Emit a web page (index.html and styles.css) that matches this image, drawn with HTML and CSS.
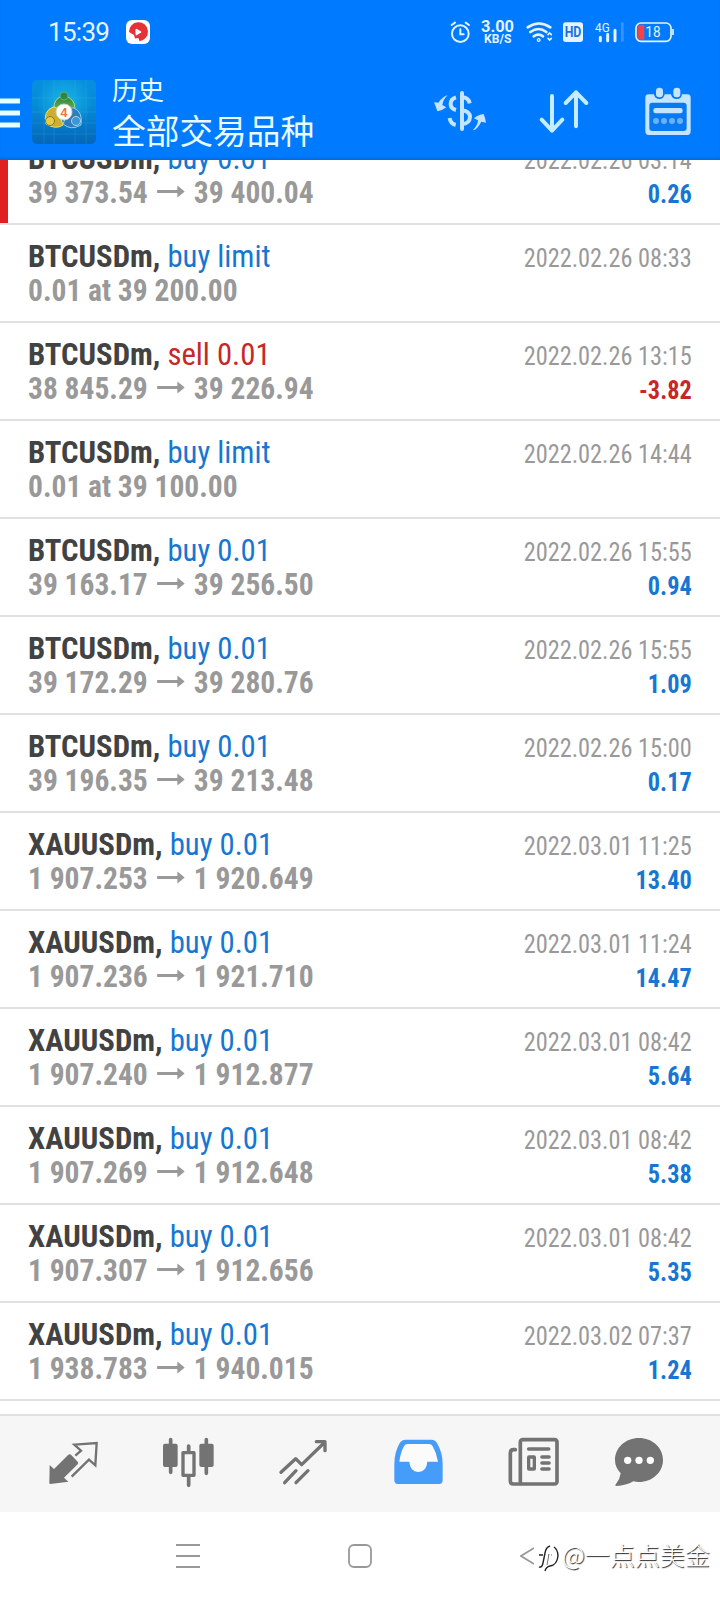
FILE: index.html
```
<!DOCTYPE html>
<html lang="zh-CN">
<head>
<meta charset="utf-8">
<title>历史</title>
<link rel="stylesheet" href="styles.css">
</head>
<body>
<div class="screen">
  <header class="header">
    <div class="status">
      <span class="clock">15:39</span>
      <svg class="rec" width="24" height="24" viewBox="0 0 24 24"><rect width="24" height="24" rx="6" fill="#fff"/><path d="M3 12a9.500 9.500 0 1 1 10.500 9.200L12.500 18 9 18.500 8 15z" fill="#e53238"/><path d="M10.500 9.800l3.800 2.200-3.800 2.200z" fill="#fff" stroke="#fff" stroke-width="2" stroke-linejoin="round"/></svg>
      <div class="status-icons">
        <svg width="24" height="28" viewBox="264 54 72 84" fill="none" stroke="#e4f3ff" stroke-width="6" stroke-linecap="round"><circle cx="301" cy="101" r="25"/><path d="M301 88v15h10M275 75l10-7M327 75l-10-7"/></svg>
        <svg class="gap8 speed" width="36" height="28" viewBox="360 54 108 84"><text x="363" y="95" font-size="48" textLength="99" lengthAdjust="spacingAndGlyphs">3.00</text><text x="372" y="130" font-size="37" textLength="82" lengthAdjust="spacingAndGlyphs">KB/S</text></svg>
        <svg class="gap8" width="30" height="28" viewBox="492 54 90 84" fill="none" stroke="#e4f3ff" stroke-width="8" stroke-linecap="round"><path d="M503 82q34-23 68 0M511 96q25-18 48 0M521 109q14-10 28 0"/><circle cx="536" cy="120" r="2"/><path d="M564 104l5-5 5 5M564 115l5 5 5-5" stroke-width="5"/></svg>
        <svg class="gap8" width="22" height="28" viewBox="606 54 66 84"><rect x="609" y="67" width="60" height="59" rx="8" fill="#e4f3ff"/><text class="hd" x="614" y="112" font-size="44" textLength="50" lengthAdjust="spacingAndGlyphs">HD</text></svg>
        <svg class="gap10" width="32" height="28" viewBox="702 54 96 84"><text class="net" x="705" y="96" font-size="40" textLength="44" lengthAdjust="spacingAndGlyphs">4G</text><path d="M721 112v10M743 103v19M765 91v31" stroke="#e4f3ff" stroke-width="9" stroke-linecap="round"/><path d="M787 67v58" stroke="#3c93ff" stroke-width="8"/></svg>
        <svg class="gap8" width="42" height="28" viewBox="822 54 126 84"><rect x="828" y="69" width="105" height="55" rx="15" fill="none" stroke="#e4f3ff" stroke-width="5"/><path d="M853 74h-10q-10 0-10 10v25q0 10 10 10h10z" fill="#f0434e"/><path d="M939 87v18" stroke="#e4f3ff" stroke-width="5"/><text class="net" x="856" y="112" font-size="44" textLength="46" lengthAdjust="spacingAndGlyphs">18</text></svg>
      </div>
    </div>
    <div class="appbar">
      <svg class="burger" width="20" height="30" viewBox="0 0 20 30"><path d="M0 3h20M0 15h20M0 27h20" stroke="#e6ffff" stroke-width="5"/></svg>
      <svg class="logo" width="64" height="64" viewBox="0 0 64 64">
        <defs>
          <linearGradient id="bg" x1="0" y1="0" x2="0" y2="1"><stop offset="0" stop-color="#078fdf"/><stop offset=".4" stop-color="#068bd6"/><stop offset="1" stop-color="#0566b8"/></linearGradient>
          <radialGradient id="glow"><stop offset="0" stop-color="#20c0e8"/><stop offset="1" stop-color="#20c0e8" stop-opacity="0"/></radialGradient>
          <linearGradient id="gr" x1="0" y1="0" x2="0" y2="1"><stop offset="0" stop-color="#267f3c"/><stop offset="1" stop-color="#83c653"/></linearGradient>
        </defs>
        <rect width="64" height="64" rx="5" fill="url(#bg)"/>
        <circle cx="32" cy="22" r="28" fill="url(#glow)" opacity=".8"/>
        <path d="M12 0v64M22 0v64M43 0v64M54 0v64M0 18h64M0 32h64M0 43h64M0 54h64" stroke="#42bce9" stroke-width=".7" opacity=".3"/>
        <path d="M22 29q-1-11 10-13 11 2 11 13l-3 6H24z" fill="url(#gr)" stroke="#a9d98c" stroke-width="1"/>
        <circle cx="32" cy="16" r="4" fill="#2c8646" stroke="#5fb070"/>
        <path d="M14 44q-3-13 7-17 5 0 5 4l5 14q-7 5-17-1z" fill="#cfae2b" stroke="#efe07c" stroke-width="1"/>
        <circle cx="18" cy="41" r="4.500" fill="#e4cd48" stroke="#8d7716"/>
        <path d="M49 45q2-13-7-17-5-1-6 4l-5 12q8 7 18 1z" fill="#2f7cc0" stroke="#8fcaf0" stroke-width="1"/>
        <circle cx="44" cy="41" r="4.500" fill="#3d96d7" stroke="#a5d6f3"/>
        <circle cx="32" cy="32" r="8" fill="#fff" stroke="#c9d3c1"/>
        <text class="four" x="28.500" y="36.500" font-size="12.500">4</text>
      </svg>
      <div class="titles">
        <div class="title">历史</div>
        <div class="subtitle">全部交易品种</div>
      </div>
      <div class="actions">
        <svg width="56" height="50" viewBox="216 261 168 150" fill="none" stroke="#c5e4ff" stroke-width="12" stroke-linecap="round"><path d="M306 279v108" stroke-width="12"/><path d="M329 310q-4-18-23-18M288 292q-16 4-16 20 0 14 16 18M306 331q23 3 24 20-1 20-24 21M269 354q2 17 18 21" stroke-linecap="butt"/><path d="M263 286q-13 2-28 22l-13-1q6 14 10 27 15-2 27-12l-12-7q3-18 16-29zM338 391q14-2 26-26l14 3q-2-14-7-26-15 1-29 13l12 6q-1 16-16 30z" fill="#c5e4ff" stroke="none"/></svg>
        <svg class="sort" width="52" height="50" viewBox="534 261 156 150" fill="none" stroke="#c5ecff" stroke-width="12" stroke-linecap="round" stroke-linejoin="round"><path d="M576 288v104M545 359l31 33 31-33M648 379V277M617 309l31-32 31 32"/></svg>
        <svg class="cal" width="48" height="50" viewBox="852 261 144 150"><path d="M866 283h16q2 14 16 14t16-14h19q2 14 17 14t16-14h16q10 0 10 10v101q0 11-10 11H866q-10 0-10-11V293q0-10 10-10z" fill="#c5e4ff"/><rect x="868" y="308" width="112" height="85" rx="9" fill="#0879f0"/><rect x="888" y="263" width="21" height="29" rx="10" fill="#c5e4ff"/><rect x="940" y="263" width="21" height="29" rx="10" fill="#c5e4ff"/><rect x="880" y="324" width="88" height="16" rx="7" fill="#c5e4ff"/><g fill="#69b2fb"><circle cx="888" cy="363" r="9"/><circle cx="912" cy="363" r="9"/><circle cx="936" cy="363" r="9"/><circle cx="960" cy="363" r="9"/></g></svg>
      </div>
    </div>
  </header>

  <main class="list" id="list"></main>

  <nav class="tabs">
    <svg width="56" height="60" viewBox="135 96 168 180"><path d="M149 195l13 12 43-43q4-3 8 0l20 21q3 4 0 8l-41 40 13 12-54 7q-3 0-3-3z" fill="#737373"/><path d="M226 167l17-15-20-18 67-5-4 67-19-17-52 51" fill="none" stroke="#737373" stroke-width="7"/></svg>
    <svg width="56" height="60" viewBox="480 96 168 180" fill="none" stroke="#737373"><path d="M512 119v98M566 138v118M619 119v101" stroke-width="11" stroke-linecap="round"/><rect x="489" y="131" width="44" height="70" rx="6" fill="#737373" stroke="none"/><rect x="598" y="131" width="43" height="70" rx="6" fill="#737373" stroke="none"/><rect x="549" y="158" width="33" height="68" fill="#f6f6f6" stroke-width="10" stroke-linejoin="round"/></svg>
    <svg width="56" height="60" viewBox="825 96 168 180" fill="none" stroke="#737373" stroke-width="10" stroke-linecap="round" stroke-linejoin="round"><path d="M843 217l44-41 18 18 70-68M949 125h26v27M854 248l34-36M888 248l36-36"/></svg>
    <svg width="56" height="60" viewBox="90 96 168 180"><path d="M137 119h76q14 0 19 12 16 27 16 60v50q0 11-11 11H114q-11 0-11-11v-50q0-33 15-60 6-12 19-12z" fill="#459df9"/><path d="M143 132h63q9 0 12 7 12 20 16 46h-32q-2 30-27 31-25-1-27-31h-30q4-29 14-46 3-7 11-7z" fill="#fbfbfb"/></svg>
    <svg width="56" height="60" viewBox="435 96 168 180" fill="none" stroke="#737373" stroke-width="11"><rect x="481" y="119" width="110" height="133" rx="7"/><path d="M466 149h-5q-10 0-10 10v83q0 10 10 10h22" stroke-linecap="round"/><path d="M506 147h60M546 171h21M546 189h21M546 207h21" stroke-linecap="round"/><rect x="506" y="171" width="17" height="36" rx="1" stroke-width="10"/></svg>
    <svg class="last" width="56" height="60" viewBox="753 96 168 180"><path d="M837 114c40 0 72 29 72 66s-32 66-72 66q-9 0-17-2-22 13-51 14-6-1-1-6 12-15 14-32-17-18-17-40c0-37 32-66 72-66z" fill="#737373"/><g fill="#fff"><circle cx="803" cy="181" r="11"/><circle cx="837" cy="181" r="11"/><circle cx="871" cy="181" r="11"/></g></svg>
  </nav>

  <footer class="sysnav">
    <svg class="recent" width="24" height="24" viewBox="0 0 24 24"><path d="M0 1h24M0 12h24M0 23h24" stroke="#999" stroke-width="2"/></svg>
    <svg class="home" width="24" height="24" viewBox="0 0 24 24"><rect x="1" y="1" width="22" height="22" rx="5" fill="none" stroke="#999" stroke-width="1.800"/></svg>
    <svg class="back" width="14" height="18" viewBox="0 0 14 18"><path d="M14 1L1 9l13 8" fill="none" stroke="#999" stroke-width="1.800"/></svg>
    <svg class="mark" width="23" height="30" viewBox="0 0 23 30" fill="none" stroke="#222"><path d="M2 24q3 1 4-4l2-10q1-6 5-7M2 12h4M17 4q4 3 4 9-1 9-8 10-4 1-5 5" stroke-width="1.400"/><path d="M10 22l2-11M11 12h1M14 12h1" stroke-width="1" stroke="#777"/></svg>
    <span class="watermark">@一点点美金</span>
  </footer>
</div>
<script src="rows.js"></script>
</body>
</html>
```

FILE: styles.css
```
* { box-sizing: border-box; }
body { margin: 0; background: #fff; }
svg { display: block; flex: none; }
.screen {
  width: 720px;
  height: 1600px;
  display: flex;
  flex-direction: column;
  overflow: hidden;
  background: #fff;
  font-family: "Roboto Condensed", Roboto, "Noto Sans CJK SC", sans-serif;
}
.header { flex: none; height: 160px; background: #007aff; box-shadow: inset 0 -3px 2px -1px #086bda; }
.status { height: 64px; display: flex; align-items: center; padding-left: 48px; }
.clock { width: 78px; font: 400 26px/30px Roboto, sans-serif; letter-spacing: -0.7px; color: #e4f3ff; }
.status-icons { display: flex; margin-left: 298px; }
.gap8 { margin-left: 8px; }
.gap10 { margin-left: 10px; }
.speed text { font-family: Roboto, sans-serif; font-weight: 700; fill: #e4f3ff; }
.hd { font-family: Roboto, sans-serif; font-weight: 700; fill: #1474e0; }
.net { font-family: Roboto, sans-serif; fill: #e4f3ff; }
.four { font-family: "Liberation Sans", sans-serif; font-weight: 700; fill: #e8743c; }

.appbar { height: 96px; display: flex; align-items: flex-start; }
.burger { margin-top: 34px; }
.logo { margin: 16px 0 0 12px; }
.titles { width: 216px; margin: 8px 0 0 16px; color: #e8fbff; font-family: "Noto Sans CJK SC", sans-serif; white-space: nowrap; font-weight: 400; }
.title { font-size: 26px; line-height: 34px; }
.subtitle { font-size: 33.7px; line-height: 48px; }
.actions { display: flex; margin: 23px 0 0 104px; }
.sort { margin-left: 50px; }
.cal { margin-left: 54px; }

.list { flex: none; height: 1254px; overflow: hidden; display: flex; flex-direction: column; justify-content: flex-start; }
.row {
  flex: none;
  height: 98px;
  padding: 14px 28px 0;
  display: flex;
  justify-content: space-between;
  border-bottom: 2px solid #e1e1e1;
  font-stretch: 75%;
  font-size: 32px;
  line-height: 34px;
  white-space: nowrap;
}
.row.cut { margin-top: -33px; box-shadow: inset 8px 0 #de2020; }
.head { transform: scaleX(.96); transform-origin: left; }
.symbol { font-weight: 700; color: #424242; }
.buy { color: #1676d2; }
.sell { color: #c62828; }
.prices { display: flex; align-items: center; font-weight: 700; color: #999; transform: scaleX(.922); transform-origin: left; }
.arrow { margin: 0 10px; }
.meta { padding-top: 2px; text-align: right; font-size: 26px; color: #999; transform: scaleX(.935); transform-origin: right; }
.profit { font-weight: 700; }

.tabs { flex: none; height: 98px; display: flex; gap: 59px; padding: 16px 0 0 45px; background: #f6f6f6; border-top: 2px solid #e1e1e1; }
.last { margin-left: -9px; }

.sysnav { height: 88px; display: flex; align-items: flex-start; padding: 32px 0 0 176px; }
.home { margin-left: 148px; }
.back { margin: 3px 0 0 148px; }
.mark { margin: -1px 0 0 3px; }
.watermark { margin: -8px 0 0 2px; font: 300 25px/36px "Noto Sans CJK SC", sans-serif; color: #fff; text-shadow: 1px 1px 1px #222; white-space: nowrap; }
```

FILE: rows.js
```
const deals = [
  ['BTCUSDm', 'buy 0.01', '39 373.54', '39 400.04', '2022.02.26 03:14', '0.26'],
  ['BTCUSDm', 'buy limit', '0.01 at 39 200.00', '', '2022.02.26 08:33', ''],
  ['BTCUSDm', 'sell 0.01', '38 845.29', '39 226.94', '2022.02.26 13:15', '-3.82'],
  ['BTCUSDm', 'buy limit', '0.01 at 39 100.00', '', '2022.02.26 14:44', ''],
  ['BTCUSDm', 'buy 0.01', '39 163.17', '39 256.50', '2022.02.26 15:55', '0.94'],
  ['BTCUSDm', 'buy 0.01', '39 172.29', '39 280.76', '2022.02.26 15:55', '1.09'],
  ['BTCUSDm', 'buy 0.01', '39 196.35', '39 213.48', '2022.02.26 15:00', '0.17'],
  ['XAUUSDm', 'buy 0.01', '1 907.253', '1 920.649', '2022.03.01 11:25', '13.40'],
  ['XAUUSDm', 'buy 0.01', '1 907.236', '1 921.710', '2022.03.01 11:24', '14.47'],
  ['XAUUSDm', 'buy 0.01', '1 907.240', '1 912.877', '2022.03.01 08:42', '5.64'],
  ['XAUUSDm', 'buy 0.01', '1 907.269', '1 912.648', '2022.03.01 08:42', '5.38'],
  ['XAUUSDm', 'buy 0.01', '1 907.307', '1 912.656', '2022.03.01 08:42', '5.35'],
  ['XAUUSDm', 'buy 0.01', '1 938.783', '1 940.015', '2022.03.02 07:37', '1.24'],
];
const arrow = '<svg class="arrow" width="30" height="14" viewBox="0 0 30 14"><path d="M0 6.500h24" stroke="#999" stroke-width="3"/><path d="M22 .5l8 6-8 6z" fill="#999"/></svg>';
document.getElementById('list').innerHTML = deals.map(([symbol, action, open, close, time, profit], i) => `
  <section class="row${i === 0 ? ' cut' : ''}">
    <div class="deal">
      <div class="head"><span class="symbol">${symbol},</span> <span class="${action.split(' ')[0]}">${action}</span></div>
      <div class="prices"><span>${open}</span>${close ? arrow + `<span>${close}</span>` : ''}</div>
    </div>
    <div class="meta">
      <div class="time">${time}</div>
      <div class="profit ${profit[0] === '-' ? 'sell' : 'buy'}">${profit}</div>
    </div>
  </section>`).join('');
```
